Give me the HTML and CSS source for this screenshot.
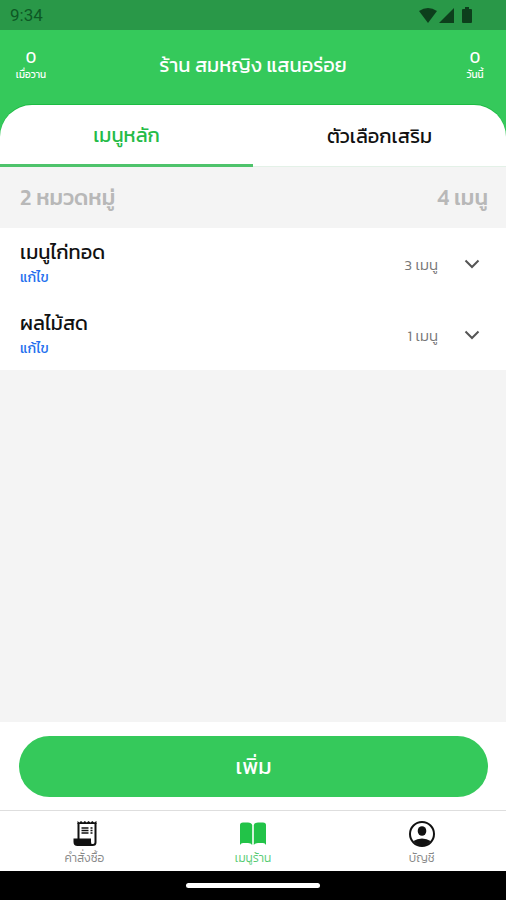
FILE: index.html
```html
<!DOCTYPE html>
<html lang="th">
<head>
<meta charset="utf-8">
<meta name="viewport" content="width=device-width, initial-scale=1">
<title>ร้าน สมหญิง แสนอร่อย</title>
<link rel="stylesheet" href="styles.css">
</head>
<body>
<div class="status">
  <span>9:34</span>
  <div class="status-icons">
    <svg width="18" height="15" viewBox="0 0 18 15"><path d="M0 3Q9-3 18 3L9 15Z"/></svg>
    <svg width="15" height="15" viewBox="0 0 15 15"><path d="M15 0V15H0Z"/></svg>
    <svg class="battery" width="10" height="16" viewBox="0 0 10 16"><path d="M3 0h4v2h2q1 0 1 1v12q0 1-1 1H1q-1 0-1-1V3q0-1 1-1h2Z"/></svg>
  </div>
</div>
<header class="header">
  <div class="stat"><span class="stat-number">0</span><span class="stat-label">เมื่อวาน</span></div>
  <h1 class="shop-name">ร้าน สมหญิง แสนอร่อย</h1>
  <div class="stat"><span class="stat-number">0</span><span class="stat-label">วันนี้</span></div>
</header>
<div class="tabs-back">
  <div class="tabs" role="tablist">
    <button class="tab active" role="tab" aria-selected="true">เมนูหลัก</button>
    <button class="tab" role="tab" aria-selected="false">ตัวเลือกเสริม</button>
  </div>
</div>
<main class="content">
  <div class="summary"><span>2 หมวดหมู่</span><span>4 เมนู</span></div>
  <ul class="categories">
    <li class="category">
      <div class="category-info"><h2 class="category-name">เมนูไก่ทอด</h2><a class="edit" href="#">แก้ไข</a></div>
      <span class="count">3 เมนู</span>
      <button class="expand" aria-label="เมนูไก่ทอด"><svg width="16" height="10" viewBox="0 0 16 10"><path d="M1.500 1.500 8 8l6.500-6.500"/></svg></button>
    </li>
    <li class="category">
      <div class="category-info"><h2 class="category-name">ผลไม้สด</h2><a class="edit" href="#">แก้ไข</a></div>
      <span class="count">1 เมนู</span>
      <button class="expand" aria-label="ผลไม้สด"><svg width="16" height="10" viewBox="0 0 16 10"><path d="M1.500 1.500 8 8l6.500-6.500"/></svg></button>
    </li>
  </ul>
</main>
<div class="action"><button class="add">เพิ่ม</button></div>
<nav class="nav">
  <a class="nav-item" href="#">
    <svg width="28" height="28" viewBox="0 0 28 28">
      <path d="M8.500 19V3M25.500 3v19.500q0 2.500-3 2.500H7" fill="none" stroke="currentColor" stroke-width="2"/>
      <path d="M3.500 18.500H21V22q0 2 2 4H7.500q-4 0-4-4Z"/>
      <path d="M7.500 4V1l1.800 1.500L11 1l2 1.500L14.800 1l2 1.500L18.500 1l2 1.500L22.300 1l1.800 1.500L26.500 1v3Z"/>
      <path d="M11.500 8h7M11.500 10.500h7M11.500 13h7M20.500 8h2M20.500 10.500h2M20.500 13h2" fill="none" stroke="currentColor" stroke-width="1.600"/>
    </svg>
    <span class="nav-label">คำสั่งซื้อ</span>
  </a>
  <a class="nav-item current" href="#" aria-current="page">
    <svg width="28" height="28" viewBox="0 0 28 28"><path d="M1 5q0-2.500 3-2.500h5q3.500 0 4.200 2.500v20Q12 23 9 23H4q-2 0-3 2ZM14.800 5q.7-2.500 4.200-2.500h5q3 0 3 2.500v20q-1-2-3-2h-5q-3 0-4.200 2Z"/></svg>
    <span class="nav-label">เมนูร้าน</span>
  </a>
  <a class="nav-item" href="#">
    <svg width="28" height="28" viewBox="0 0 28 28"><circle cx="14" cy="14" r="12" fill="none" stroke="currentColor" stroke-width="2"/><ellipse cx="14" cy="11" rx="4.300" ry="4.800"/><path d="M5.500 21q3.500-2.500 8.500-2.500t8.500 2.500Q19 26 14 26T5.500 21Z"/></svg>
    <span class="nav-label">บัญชี</span>
  </a>
</nav>
<div class="gesture"><div class="handle"></div></div>
</body>
</html>
```
FILE: styles.css
```css
* { box-sizing: border-box; }
body {
  margin: 0;
  min-height: 100vh;
  display: flex;
  flex-direction: column;
  background: #f4f4f4;
  color: #111;
  font-family: Kanit, Prompt, "Noto Sans Thai", "Open Sans", sans-serif;
}
button { border: 0; padding: 0; background: none; color: inherit; font: inherit; cursor: pointer; }
a { text-decoration: none; }
h1, h2, ul { margin: 0; padding: 0; }
svg { display: block; fill: currentColor; }
.status {
  height: 30px;
  padding: 0 34px 0 10px;
  display: flex;
  align-items: center;
  justify-content: space-between;
  background: #299848;
  color: #0d5825;
  font: 17px Roboto, sans-serif;
}
.status-icons { display: flex; align-items: center; gap: 2px; color: #0d3f1c; }
.battery { margin-left: 6px; }
.header {
  height: 75px;
  padding: 0 8px 6px;
  display: grid;
  grid-template-columns: 46px 1fr 46px;
  align-items: center;
  background: #35c95b;
  color: #fff;
}
.stat { display: flex; flex-direction: column; align-items: center; }
.stat-number { font-size: 16px; line-height: 20px; }
.stat-label { font-size: 10px; line-height: 16px; white-space: nowrap; }
.shop-name { text-align: center; font-size: 20px; line-height: 28px; font-weight: 400; }
.tabs-back { background: #35c95b; }
.tabs {
  height: 62px;
  display: flex;
  overflow: hidden;
  background: #fff;
  border-radius: 32px 32px 0 0;
  box-shadow: 0 -1px 0 #1dbb43;
}
.tab { flex: 1; border-bottom: 1px solid #e3f1e7; font-size: 20px; line-height: 28px; font-weight: 400; }
.tab.active { color: #25bb47; border-bottom: 3px solid #4ec36b; }
.content { flex: 1; }
.summary {
  height: 61px;
  padding: 0 18px 0 20px;
  display: flex;
  align-items: center;
  justify-content: space-between;
  color: #b8b8b8;
  font-size: 22px;
  line-height: 32px;
  font-weight: 500;
}
.categories { list-style: none; background: #fff; }
.category { height: 71px; padding: 1px 20px 0; display: flex; align-items: center; }
.category-info { flex: 1; }
.category-name { font-size: 20px; line-height: 28px; font-weight: 400; }
.edit { display: block; color: #2470ee; font-size: 14px; line-height: 24px; font-weight: 400; }
.count { color: #777; font-size: 15px; font-weight: 300; }
.expand { width: 28px; height: 28px; margin-left: 20px; display: grid; place-items: center; }
.expand path { fill: none; stroke: #555; stroke-width: 2; }
.action { height: 88px; padding: 14px 18px 13px 19px; background: #fff; }
.add { width: 100%; height: 61px; border-radius: 31px; background: #35c95b; color: #fff; font-size: 22px; font-weight: 400; }
.nav { height: 61px; display: flex; justify-content: space-between; background: #fff; border-top: 1px solid #dedede; }
.nav-item { flex: 1; padding-top: 9px; display: flex; flex-direction: column; align-items: center; color: #111; }
.nav-item.current { color: #22c348; }
.nav-label { color: #888; font-size: 12px; line-height: 20px; font-weight: 300; }
.current .nav-label { color: #56cb73; }
.gesture { height: 29px; display: grid; place-items: center; background: #000; }
.handle { width: 134px; height: 5px; border-radius: 3px; background: #fff; }
```
